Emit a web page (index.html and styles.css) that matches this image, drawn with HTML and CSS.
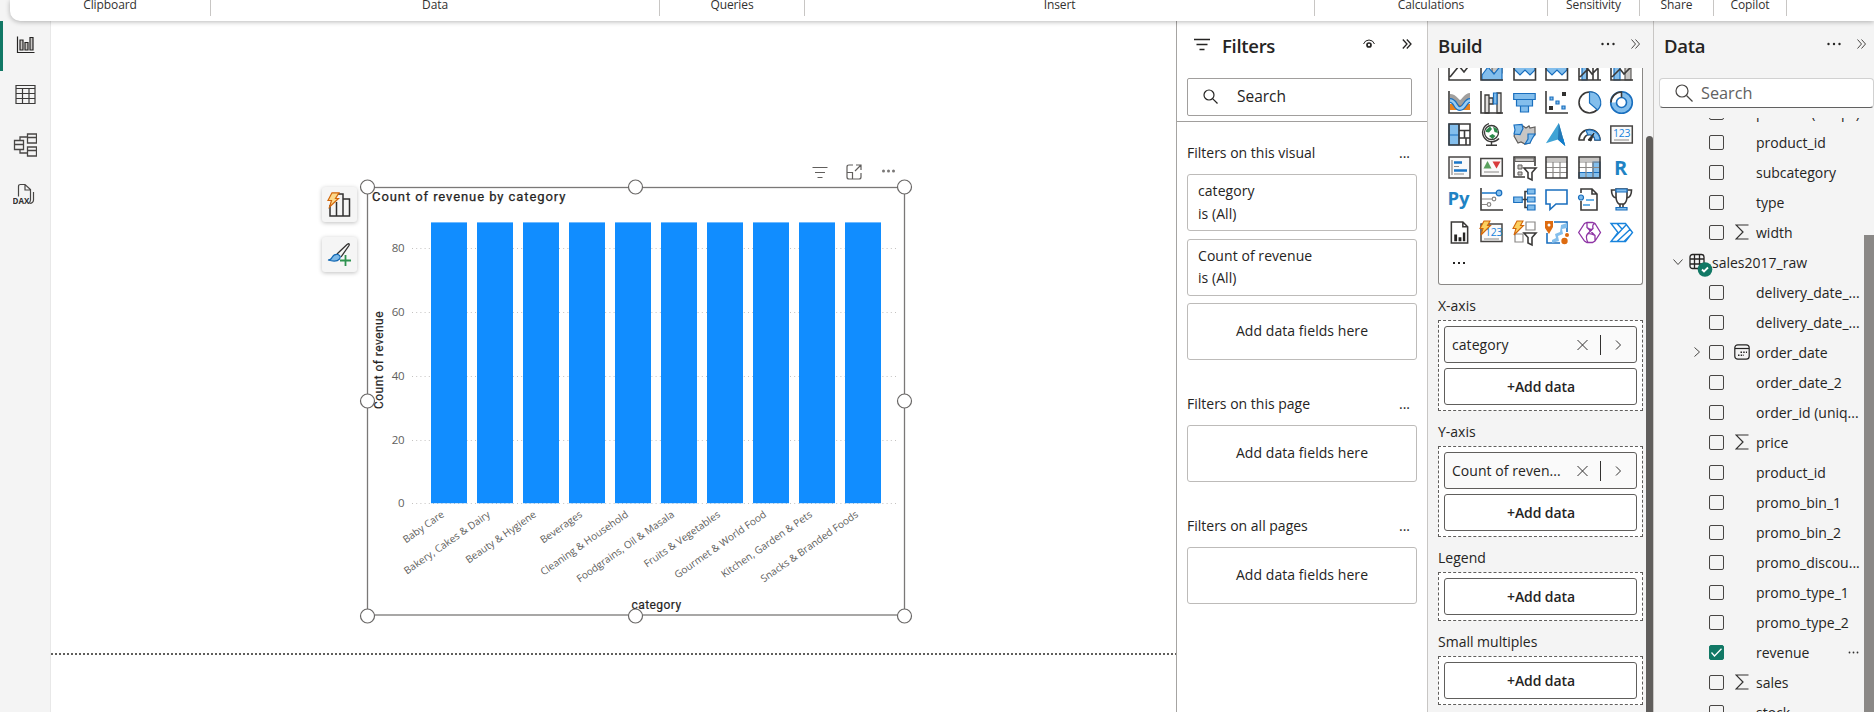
FILE: index.html
```html
<!DOCTYPE html>
<html lang="en">
<head>
<meta charset="utf-8">
<title>Report editor</title>
<link rel="stylesheet" href="styles.css">
</head>
<body>
<div class="app">
  <header class="ribbon">
    <div class="group g-clipboard">Clipboard</div>
    <div class="group g-data">Data</div>
    <div class="group g-queries">Queries</div>
    <div class="group g-insert">Insert</div>
    <div class="group g-calc">Calculations</div>
    <div class="group g-sens">Sensitivity</div>
    <div class="group g-share">Share</div>
    <div class="group g-copilot">Copilot</div>
  </header>

  <div class="workspace">
    <nav class="rail">
      <div class="rail-item active">
        <svg width="24" height="24" viewBox="0 0 24 24" fill="none" stroke="#252423" stroke-width="1.2"><path d="M4.5 3.500v16h17" /><path fill="#c8c6c4" d="M7 7h3v10H7zM12 9.500h3V17h-3zM17 4.500h3V17h-3z"/></svg>
      </div>
      <div class="rail-item">
        <svg width="24" height="24" viewBox="0 0 24 24" fill="none" stroke="#3b3a39" stroke-width="1.2"><path d="M3 2.500h19v18H3zM3 5.500h19M3 10.500h19M3 15.500h19M9.500 5.500v15M16 5.500v15"/></svg>
      </div>
      <div class="rail-item">
        <svg width="24" height="24" viewBox="0 0 24 24" fill="none" stroke="#484644" stroke-width="1.3"><path d="M14.500 1h9v9h-9zM14.500 4.500h9M14.500 14h9v9h-9zM14.500 17.500h9M1.500 7.500h9v9h-9zM1.500 11.500h9M7 7.500V4h7.500M7 16.500V20h7.500"/></svg>
      </div>
      <div class="rail-item">
        <svg width="24" height="24" viewBox="0 0 24 24" fill="none" stroke="#484644" stroke-width="1.2"><path d="M5.500 13.500V3.500q0-2 2-2H12l5.500 5V17q0 2-2 3M12 1.500V7h5.500M20.500 9v8q0 3-4 3.500"/><text x="-.500" y="20.500" class="dax">DAX</text></svg>
      </div>
    </nav>

    <main class="canvas">
      <div class="side-tools">
        <button class="tool"><svg width="25" height="25" viewBox="0 0 25 25" fill="none" stroke="#323130" stroke-width="1.500"><path d="M3 13v11h19.500V7H16M9.500 24V10M16 24V2H11"/><path d="M5 .8h7L8.500 6.500h3L2.500 15l2-6.500H1z" fill="#fcd98b" stroke="#d2660a" stroke-width="1.200"/></svg></button>
        <button class="tool"><svg width="25" height="25" viewBox="0 0 25 25" fill="none"><path d="M10 12 20 2.500q3-2 2 1L14 15" stroke="#323130" stroke-width="1.300"/><path d="M1 18q3 0 4-2.500 2-4 6-3 3.500 1.500 1.500 4.500-3 3.500-11.500 1z" fill="#7cb9e8" stroke="#1268b3" stroke-width="1.200"/><path d="M18.500 13v11M13 18.500h11" stroke="#2f9350" stroke-width="1.800"/></svg></button>
      </div>
      <div class="visual-actions">
        <svg width="16" height="16" viewBox="0 0 16 16" stroke="#605e5c" fill="none"><path d="M.5 3.500h15M3 8.500h10M5.500 13.500h5"/></svg>
        <svg width="16" height="16" viewBox="0 0 16 16" stroke="#605e5c" fill="none" stroke-width="1.200"><path d="M7 1H3Q1 1 1 3v10q0 2 2 2h10q2 0 2-2V9M1 8.500h5.500V15M9 7l6-6M10 1h5v5"/></svg>
        <svg width="16" height="16" viewBox="0 0 16 16" fill="#7a7877"><circle cx="3.500" cy="7" r="1.500"/><circle cx="8.500" cy="7" r="1.500"/><circle cx="13.500" cy="7" r="1.500"/></svg>
      </div>
      <svg class="chart" width="554" height="446" viewBox="359 178 554 446">
        <g stroke="#c4c2c0" stroke-dasharray="1 3.200"><path d="M412 248.500h486M412 312.500h486M412 376.500h486M412 440.500h486M412 503.500h486"/></g>
        <g fill="#118dff">
          <rect x="431" y="222.400" width="36" height="280.800"/><rect x="477" y="222.400" width="36" height="280.800"/><rect x="523" y="222.400" width="36" height="280.800"/><rect x="569" y="222.400" width="36" height="280.800"/><rect x="615" y="222.400" width="36" height="280.800"/><rect x="661" y="222.400" width="36" height="280.800"/><rect x="707" y="222.400" width="36" height="280.800"/><rect x="753" y="222.400" width="36" height="280.800"/><rect x="799" y="222.400" width="36" height="280.800"/><rect x="845" y="222.400" width="36" height="280.800"/>
        </g>
        <g class="tick" text-anchor="end"><text x="404.500" y="252">80</text><text x="404.500" y="316">60</text><text x="404.500" y="380">40</text><text x="404.500" y="443.500">20</text><text x="404.500" y="507">0</text></g>
        <g class="cat" text-anchor="end">
          <text transform="translate(445 516) rotate(-35)">Baby Care</text>
          <text transform="translate(491 516) rotate(-35)">Bakery, Cakes &amp; Dairy</text>
          <text transform="translate(537 516) rotate(-35)">Beauty &amp; Hygiene</text>
          <text transform="translate(583 516) rotate(-35)">Beverages</text>
          <text transform="translate(629 516) rotate(-35)">Cleaning &amp; Household</text>
          <text transform="translate(675 516) rotate(-35)">Foodgrains, Oil &amp; Masala</text>
          <text transform="translate(721 516) rotate(-35)">Fruits &amp; Vegetables</text>
          <text transform="translate(767 516) rotate(-35)">Gourmet &amp; World Food</text>
          <text transform="translate(813 516) rotate(-35)">Kitchen, Garden &amp; Pets</text>
          <text transform="translate(859 516) rotate(-35)">Snacks &amp; Branded Foods</text>
        </g>
        <text class="chart-title" x="372" y="201">Count of revenue by category</text>
        <text class="axis-title" text-anchor="middle" transform="translate(383 360) rotate(-90)">Count of revenue</text>
        <text class="axis-title" text-anchor="middle" x="656.500" y="609">category</text>
        <rect x="367.500" y="187.500" width="537" height="427.500" fill="none" stroke="#7a7877" stroke-width="1.300"/>
        <g fill="#fff" stroke="#6a6867" stroke-width="1.200"><circle cx="367.500" cy="187" r="7"/><circle cx="635.500" cy="187" r="7"/><circle cx="904.500" cy="187" r="7"/><circle cx="367.500" cy="401" r="7"/><circle cx="904.500" cy="401" r="7"/><circle cx="367.500" cy="616" r="7"/><circle cx="635.500" cy="616" r="7"/><circle cx="904.500" cy="616" r="7"/></g>
      </svg>
      <div class="page-edge"></div>
    </main>

    <aside class="filters">
      <div class="filters-head">
        <svg width="16" height="14" viewBox="0 0 16 14" stroke="#252423" stroke-width="1.300"><path d="M0 1.500h16M2.500 6.500h11M5.500 11.500h5"/></svg>
        <h2>Filters</h2>
        <svg class="eye" width="12" height="10" viewBox="0 0 12 10" fill="none" stroke="#252423"><path d="M.5 5Q2 1 6 1t5.500 4" /><circle cx="6" cy="6" r="2" stroke-width="1.700"/></svg>
        <svg width="10" height="10" viewBox="0 0 10 10" fill="none" stroke="#252423" stroke-width="1.300"><path d="M.8.5 5 5 .8 9.500M4.800.5 9 5 4.800 9.500"/></svg>
      </div>
      <div class="filter-search">
        <svg width="15" height="15" viewBox="0 0 15 15" fill="none" stroke="#252423" stroke-width="1.200"><circle cx="6" cy="6" r="5"/><path d="m9.600 9.600 4.900 4.900"/></svg>
        <span>Search</span>
      </div>
      <section class="filter-group first">
        <div class="group-head"><span>Filters on this visual</span><i>...</i></div>
        <div class="card"><p>category</p><p>is (All)</p></div>
        <div class="card"><p>Count of revenue</p><p>is (All)</p></div>
        <div class="card drop">Add data fields here</div>
      </section>
      <section class="filter-group">
        <div class="group-head"><span>Filters on this page</span><i>...</i></div>
        <div class="card drop">Add data fields here</div>
      </section>
      <section class="filter-group">
        <div class="group-head"><span>Filters on all pages</span><i>...</i></div>
        <div class="card drop">Add data fields here</div>
      </section>
    </aside>

    <aside class="build">
      <div class="pane-head">
        <h2>Build</h2>
        <svg width="14" height="4" viewBox="0 0 14 4" fill="#252423"><circle cx="1.500" cy="2" r="1.200"/><circle cx="7" cy="2" r="1.200"/><circle cx="12.500" cy="2" r="1.200"/></svg>
        <svg width="9" height="10" viewBox="0 0 9 10" fill="none" stroke="#484644"><path d="M.5.500 4.500 5l-4 4.500M4.500.500 8.500 5l-4 4.500"/></svg>
      </div>
      <div class="gallery">
        <div class="grid">
          <svg viewBox="0 0 23 23"><path class="k" d="M1 0v22h22M2 19 11 8l5 6 7-9M2 9l6-6"/></svg>
          <svg viewBox="0 0 23 23"><path class="g" d="M12 5h10v10H12z"/><path class="f" d="m2 17 6-8 6 7 8-10v16H2z"/><path class="k" d="M1 0v22h22"/></svg>
          <svg viewBox="0 0 23 23"><path class="f" d="M1 11l6 6 5-5 5 5 5-5V5H1z"/><path class="k" d="M1 0v22h21.500V0"/></svg>
          <svg viewBox="0 0 23 23"><path class="f" d="M1 11l6 6 5-5 5 5 5-5V5H1z"/><path class="k" d="M1 0v22h21.500V0"/></svg>
          <svg viewBox="0 0 23 23"><path class="f" d="M4 6h5v16H4z"/><path class="k" d="M1 0v22h22M2 19l8-8 4 5 8-8M9 5v17M15 8v14M20 4v18"/></svg>
          <svg viewBox="0 0 23 23"><path class="f" d="M4 4h6v18H4z"/><path class="g" d="M15 5h6v17h-6z"/><path class="k" d="M1 0v22h22M2 19l8-8 4 5 8-8"/></svg>

          <svg viewBox="0 0 23 23"><path d="M2 13h20v6H2z" fill="#e8811e"/><path d="M2 5.500c6 0 6 6 10 6s5-7 10-7" stroke="#a19f9d" stroke-width="5" fill="none"/><path d="M2 9.500c6 0 5 8 10 8s5-8 10-8" stroke="#1a6fbe" stroke-width="5" fill="none"/><path d="M2 9.500c6 0 5 8 10 8s5-8 10-8" stroke="#9accf2" stroke-width="2.500" fill="none"/><path class="k" d="M1 0v22h22"/></svg>
          <svg viewBox="0 0 23 23"><path fill="#e1dfdd" stroke="#3b3a39" stroke-width="1.300" d="M5 4h4v18H5zM9 7h4v6H9zM17 2h4v20h-4z"/><path class="k" d="M1 0v22h22"/><path class="f" d="M13.500 2H17v11h-3.500z"/></svg>
          <svg viewBox="0 0 23 23"><path class="f" d="M.700 2.500h21.500v6H.700zM3.500 8.500h16V15h-16zM7.500 15h8v6h-8z"/></svg>
          <svg viewBox="0 0 23 23"><path class="k" d="M1 0v22h22"/><path class="f" d="M5 6h3v3H5zM11 10h3v3h-3zM17 15h3v3h-3z"/><path fill="#323130" d="M17 1h4v4h-4zM4 15h4v4H4z"/></svg>
          <svg viewBox="0 0 23 23"><circle class="k" cx="11.500" cy="11.500" r="10.500"/><path class="f" d="M11.500 1v11l8 7A10.500 10.500 0 0 0 11.500 1z"/></svg>
          <svg viewBox="0 0 23 23"><circle cx="11.500" cy="11.500" r="8" fill="none" stroke="#83beec" stroke-width="6"/><path d="M4 11.500a7.500 7.500 0 0 1 7.500-7.500" stroke="#fff" stroke-width="5" fill="none"/><circle cx="11.500" cy="11.500" r="10.800" class="b"/><circle cx="11.500" cy="11.500" r="5" class="b"/><path class="k" d="M1 11.500A10.500 10.500 0 0 1 11.500 1v5.500"/></svg>

          <svg viewBox="0 0 23 23"><path class="f" d="M1 1h10v21H1zM1 12h10"/><path class="k" d="M1 1h21v21H1zM11 1v21M11 7.500h11M16.500 7.500V15M11 15h11M18 15v7"/></svg>
          <svg viewBox="0 0 23 23"><circle cx="11.500" cy="9.500" r="7" fill="#fff" stroke="#3b3a39" stroke-width="1.300"/><path fill="#2b8a4a" d="M6 7l4-3.500 2 2.500-3 3.500-3-.500zM13 3.500l4 2.500 1 4-3.500-1zM9 13l3.500-2 3 2-3 3z"/><path d="M9 .6A9.300 9.300 0 1 0 19 15.500M11.500 18.500v3.500M6 22.300h11" fill="none" stroke="#3b3a39" stroke-width="1.400"/></svg>
          <svg viewBox="0 0 23 23"><path class="g" d="M10 3l3 2 3-2 1 2 5-1v8l-4 3-1 5-5 1-4-2-3 1-4-7 2-4z"/><path class="f" d="M1 2l8-.500 1 4-3 6-6-.500 1-4zM15 11h7l-3 5-2 4-5 1 3-5z"/></svg>
          <svg viewBox="0 0 23 25"><path fill="#3fa3d5" d="M14 0 21 25l-8-7L0 22z"/><path fill="#2478b5" d="m14 0 7 25-8-7z"/><path fill="#117dcc" d="m13 18 8 7-2-8z"/></svg>
          <svg viewBox="0 0 23 23"><path class="k" d="M1 17a10.500 10.500 0 0 1 21 0h-5a5.500 5.500 0 0 0-11 0z"/><path class="f" d="M8 7.500A10.500 10.500 0 0 1 22 17h-5a5.500 5.500 0 0 0-7-5z"/><path d="m10 17 6-7-3 8z" fill="#323130" stroke="#323130"/></svg>
          <svg viewBox="0 0 23 23"><path class="gk" d="M.800 3h21.500v17H.800z"/><text class="num" x="3" y="14">123</text><path class="gs" d="M4 17h15"/></svg>

          <svg viewBox="0 0 23 23"><path class="gk" d="M1 1h21v21H1z"/><path class="gs" d="M4 4v15"/><path d="M6 6.500h8M6 14.500h13" stroke="#1976c8" stroke-width="2.500"/><path class="gs" d="M6 10.500h5M6 18h10"/></svg>
          <svg viewBox="0 0 23 23"><path class="gk" d="M.800 2.500h21.500v17.500H.800z"/><path d="M3.500 12.500 7.500 5l4 7.500z" fill="#58a05c"/><path d="M12.500 5.500h8l-4 7z" fill="#d83b3b"/><path class="gs" d="M4 16h15"/></svg>
          <svg viewBox="0 0 23 23"><path class="k" d="M12 21H1V1h21v9"/><path fill="#c8c6c4" stroke="#605e5c" d="M2 2h19v3.500H2zM5 9h4v4H5zM5 16h4v3H5z"/><path class="k" fill="#fff" d="M11 12h12l-4 4.500V24l-4-2v-5.500z"/></svg>
          <svg viewBox="0 0 23 23"><path class="gs" d="M1 6h21M1 11.500h21M1 16.500h21M8 6v16M15 6v16"/><path class="gg" d="M2 2h19v3H2z"/><path class="k" d="M1 1h21v21H1z"/></svg>
          <svg viewBox="0 0 23 23"><path class="f" d="M15 6h7v16h-7zM1 16.500h21V22H1z"/><path class="gs" d="M1 6h21M1 11.500h21M8 6v16M15 6v16"/><path class="gg" d="M2 2h19v3H2z"/><path class="k" d="M1 1h21v21H1z"/></svg>
          <svg viewBox="0 0 23 23"><text class="r" x="4" y="18.500">R</text></svg>

          <svg viewBox="0 0 23 23"><text class="py" x="-.500" y="17">Py</text></svg>
          <svg viewBox="0 0 23 23"><path class="k" d="M1 0v22h22"/><path d="M2 5h15" stroke="#1976c8" stroke-width="1.500"/><circle class="f" cx="19" cy="5" r="2.800"/><path class="gs" d="M2 11h10M2 16.500h5"/><circle class="gs" cx="14" cy="11" r="1.800"/><circle class="gs" cx="9" cy="16.500" r="1.800"/></svg>
          <svg viewBox="0 0 23 23"><path class="k" d="M9 11.500h6M15 3.500h-3v16h3"/><path class="f" d="M.700 9h8.500v5.500H.700zM14.500 1H22v5h-7.500zM14.500 9H22v5h-7.500zM14.500 17H22v5h-7.500z"/></svg>
          <svg viewBox="0 0 23 23"><path class="b" d="M1 2h21v14H11l-6 5.500V16H1z"/></svg>
          <svg viewBox="0 0 23 23"><path class="k" d="M3 5V1h11l5 5v16H3v-9M14 1v5h5"/><circle class="f" cx="3" cy="9.500" r="2.500"/><path d="M8 12h8M5 17h7" stroke="#3c9be0" stroke-width="1.500"/></svg>
          <svg viewBox="0 0 23 23"><path class="k" d="M5 2H1.500q0 7 4.500 8M18 2h3.500q0 7-4.500 8M6 1h11v7q0 6-3 8H9q-3-2-3-8zM10 16v4M13 16v4"/><path class="f" d="M6 1h11v3H6zM6 19.500h11v2.500H6z"/></svg>

          <svg viewBox="0 0 23 24"><path class="k" d="M3 1h12l5 5v17H3zM15 1v5h5"/><path fill="#252423" d="M6 14h3v7H6zM10.500 17h3v4h-3zM15 12h2.500v9H15z"/></svg>
          <svg viewBox="0 0 23 23"><path class="gk" d="M1 3h21v17.500H1z"/><text class="num" x="5" y="15">123</text><path class="gs" d="M4 18h15"/><path class="z" d="M4 0h6L7.500 4.500h3L1 14l2-6.500H0z"/></svg>
          <svg viewBox="0 0 23 23"><path class="gs" d="M13 1h9v8h-9zM2 13h8v8H2z"/><path class="z" d="M4 0h6L7.500 4.500h3L1 14l2-6.500H0z"/><path class="k" fill="#fff" d="M11 12h12l-4 4.500V24l-4-2v-5.500z"/></svg>
          <svg viewBox="0 0 23 23"><path class="b" d="M9 1h13v10M2 12v10h13"/><path d="M22 2v5l-5 1 1 5-5 2 1 5-7 2v-3l4-2-1-4 5-2 1-7z" fill="#83beec"/><path fill="#dd6b10" d="M0 0h8v6l-4 7-4-6z"/><circle cx="4" cy="4" r="1.500" fill="#fff"/><circle cx="22" cy="14" r="2" fill="#dd6b10"/><circle cx="19.500" cy="20" r="3.200" fill="#dd6b10"/></svg>
          <svg viewBox="0 0 23 23"><path d="M9 1.500h5.500l2.500 1 5.500 9-5.500 8.500-2.500 1.500H9L6.500 20 .700 11.500 6.500 2.500zM9 1.500v5l8 8v5.500M17 2.500q-3 .500-2 5L9.500 13q-2.500 3 .500 8.500M9 6.500q4 3 6 1M9.500 13q3-1 7.500 1.500" fill="none" stroke="#8f35a5" stroke-width="1.300"/></svg>
          <svg viewBox="0 0 23 23"><path d="M1 2.500h14.500l7 9-7 9H1l7-9zM1 2.500h6l5 5.500M7 20.500 20.500 8M3 18 16 4M14 20.500l7-7" fill="none" stroke="#1883dc" stroke-width="1.400"/></svg>
        </div>
        <div class="more"><b></b><b></b><b></b></div>
      </div>

      <h3>X-axis</h3>
      <div class="well">
        <div class="pill"><span>category</span><svg width="46" height="20" viewBox="0 0 46 20" fill="none" stroke="#323130"><path d="M.500 5l10 10M10.500 5l-10 10M23.500 0v20M39 5.500l4.500 4.500-4.500 4.500"/></svg></div>
        <div class="add">+Add data</div>
      </div>
      <h3>Y-axis</h3>
      <div class="well">
        <div class="pill"><span>Count of reven...</span><svg width="46" height="20" viewBox="0 0 46 20" fill="none" stroke="#323130"><path d="M.500 5l10 10M10.500 5l-10 10M23.500 0v20M39 5.500l4.500 4.500-4.500 4.500"/></svg></div>
        <div class="add">+Add data</div>
      </div>
      <h3>Legend</h3>
      <div class="well"><div class="add">+Add data</div></div>
      <h3>Small multiples</h3>
      <div class="well"><div class="add">+Add data</div></div>
      <div class="build-scroll"></div>
    </aside>

    <aside class="data">
      <div class="pane-head">
        <h2>Data</h2>
        <svg width="14" height="4" viewBox="0 0 14 4" fill="#252423"><circle cx="1.500" cy="2" r="1.200"/><circle cx="7" cy="2" r="1.200"/><circle cx="12.500" cy="2" r="1.200"/></svg>
        <svg width="9" height="10" viewBox="0 0 9 10" fill="none" stroke="#484644"><path d="M.5.500 4.500 5l-4 4.500M4.500.500 8.500 5l-4 4.500"/></svg>
      </div>
      <div class="data-search">
        <svg width="18" height="18" viewBox="0 0 18 18" fill="none" stroke="#484644" stroke-width="1.200"><circle cx="7" cy="7" r="6"/><path d="m11.500 11.500 6 6"/></svg>
        <span>Search</span>
      </div>
      <div class="tree">
        <div class="field"><i class="box"></i><span>product (uniq...)</span></div>
        <div class="field"><i class="box"></i><span>product_id</span></div>
        <div class="field"><i class="box"></i><span>subcategory</span></div>
        <div class="field"><i class="box"></i><span>type</span></div>
        <div class="field"><i class="box"></i><svg class="sigma" viewBox="0 0 14 16"><path d="M13.500 1H1l7 7-7 7h12.500"/></svg><span>width</span></div>
        <div class="table">
          <svg width="10" height="6" viewBox="0 0 10 6" fill="none" stroke="#484644"><path d="m.500.500 4.500 5 4.500-5"/></svg>
          <svg width="24" height="24" viewBox="0 0 24 24" fill="none" stroke="#252423" stroke-width="1.300"><rect x="1" y="1.500" width="14" height="14" rx="2.500"/><path d="M1 6h14M1 11h14M5.500 1.500v14M10.500 1.500v14"/><circle cx="16" cy="16.500" r="7.300" fill="#117865" stroke="none"/><path d="m13 16.500 2 2 4-4" stroke="#fff" stroke-width="1.800"/></svg>
          <span>sales2017_raw</span>
        </div>
        <div class="field"><i class="box"></i><span>delivery_date_...</span></div>
        <div class="field"><i class="box"></i><span>delivery_date_...</span></div>
        <div class="field expandable"><svg class="chev" width="6" height="10" viewBox="0 0 6 10" fill="none" stroke="#484644"><path d="m.500.500 5 4.500-5 4.500"/></svg><i class="box"></i><svg class="cal" viewBox="0 0 16 16" fill="none" stroke="#252423" stroke-width="1.200"><rect x=".800" y=".800" width="14.400" height="14.400" rx="3"/><path d="M1 4.500h14"/><path d="M6.500 8.300h6.500M4 11.300h6" stroke-width="1.500" stroke-dasharray="1.500 1.200"/></svg><span>order_date</span></div>
        <div class="field"><i class="box"></i><span>order_date_2</span></div>
        <div class="field"><i class="box"></i><span>order_id (uniq...</span></div>
        <div class="field"><i class="box"></i><svg class="sigma" viewBox="0 0 14 16"><path d="M13.500 1H1l7 7-7 7h12.500"/></svg><span>price</span></div>
        <div class="field"><i class="box"></i><span>product_id</span></div>
        <div class="field"><i class="box"></i><span>promo_bin_1</span></div>
        <div class="field"><i class="box"></i><span>promo_bin_2</span></div>
        <div class="field"><i class="box"></i><span>promo_discou...</span></div>
        <div class="field"><i class="box"></i><span>promo_type_1</span></div>
        <div class="field"><i class="box"></i><span>promo_type_2</span></div>
        <div class="field"><i class="box on"><svg width="11" height="9" viewBox="0 0 11 9" fill="none" stroke="#fff" stroke-width="1.300"><path d="m.500 4.500 3 3.500L10.500.800"/></svg></i><span>revenue</span><svg class="row-more" width="11" height="3" viewBox="0 0 11 3" fill="#323130"><circle cx="1.500" cy="1.500" r=".900"/><circle cx="5.500" cy="1.500" r=".900"/><circle cx="9.500" cy="1.500" r=".900"/></svg></div>
        <div class="field"><i class="box"></i><svg class="sigma" viewBox="0 0 14 16"><path d="M13.500 1H1l7 7-7 7h12.500"/></svg><span>sales</span></div>
        <div class="field"><i class="box"></i><span>stock</span></div>
      </div>
      <div class="data-scroll"></div>
    </aside>
  </div>
</div>
</body>
</html>
```

FILE: styles.css
```css
* { box-sizing: border-box; }
body { margin: 0; font-family: "Open Sans", "Noto Sans", sans-serif; font-size: 14px; color: #252423; letter-spacing: -0.03px; }
h2, h3, p { margin: 0; font-weight: 400; }
i { font-style: normal; }
svg { display: block; flex: none; }

.app { width: 1874px; height: 712px; overflow: hidden; background: #f4f4f4; display: flex; flex-direction: column; }

/* ribbon */
.ribbon { height: 21px; flex: none; margin-left: 10px; display: flex; background: #fff; border-bottom-left-radius: 10px; box-shadow: 0 1px 5px rgba(0,0,0,.28); position: relative; z-index: 2; }
.group { height: 16px; line-height: 10px; padding-bottom: 6px; font-size: 12px; letter-spacing: -0.1px; color: #323130; border-right: 1px solid #c8c6c4; display: flex; justify-content: center; align-items: flex-end; }
.g-clipboard { width: 201px; }
.g-data { width: 449px; }
.g-queries { width: 145px; }
.g-insert { width: 510px; }
.g-calc { width: 233px; }
.g-sens { width: 92px; }
.g-share { width: 74px; }
.g-copilot { width: 73px; }

.workspace { flex: 1; display: flex; min-height: 0; }

/* view rail */
.rail { width: 51px; border-right: 1px solid #e8e8e8; flex: none; }
.rail-item { height: 50px; border-left: 3px solid transparent; padding: 12px 0 0 10px; }
.rail-item.active { border-left-color: #117865; }
.dax { font: 700 8px "Open Sans", sans-serif; fill: #323130; stroke: none; }

/* report canvas */
.canvas { position: relative; width: 1125px; flex: none; background: #fff; }
.side-tools { position: absolute; left: 271px; top: 166px; display: grid; gap: 15px; }
.tool { width: 35px; height: 35px; padding: 5px; border: 0; border-radius: 3px; background: #f5f5f5; box-shadow: 0 1px 4px rgba(0,0,0,.25); }
.visual-actions { position: absolute; left: 761px; top: 143px; display: flex; gap: 18px; }
.chart { position: absolute; left: 308px; top: 157px; }
.page-edge { position: absolute; left: 0; right: 0; top: 632px; height: 2px; background: repeating-linear-gradient(90deg, #605e5c 0 2px, transparent 2px 4px); }
.tick { font-size: 11.500px; fill: #605e5c; letter-spacing: -.2px; }
.cat { font-size: 10.100px; fill: #605e5c; letter-spacing: 0; }
.chart-title { font: 400 13px Roboto, sans-serif; letter-spacing: .92px; fill: #252423; stroke: #252423; stroke-width: .25px; }
.axis-title { font: 400 12px Roboto, sans-serif; letter-spacing: .45px; fill: #252423; stroke: #252423; stroke-width: .2px; }

/* filters pane */
.filters { width: 252px; flex: none; background: #fff; border-left: 1px solid #a6a4a2; border-right: 1px solid #c8c6c4; }
.filters-head { height: 57px; padding: 0 15px 0 17px; display: flex; align-items: flex-start; }
.filters-head > svg { margin-top: 17px; }
.filters-head > .eye { margin: 18px 27px 0 auto; }
.filters-head > svg:last-child { margin-top: 18px; }
h2 { font-size: 18.500px; font-weight: 600; line-height: 24px; letter-spacing: -.3px; margin-top: 13px; }
.filters-head h2 { margin-left: 12px; }
.filter-search { margin: 0 15px 5px 10px; height: 38px; border: 1px solid #a19f9d; border-radius: 2px; display: flex; align-items: center; padding: 0 0 2px 15px; gap: 19px; font-size: 15.500px; }
.filter-group { padding: 0 10px; margin-top: 33px; }
.filter-group.first { border-top: 1px solid #a19f9d; margin-top: 0; padding-top: 20px; }
.group-head { height: 22px; line-height: 22px; margin-bottom: 10px; display: flex; justify-content: space-between; padding-right: 7px; letter-spacing: 0; }
.card { height: 57px; border: 1px solid #bdbbb9; border-radius: 3px; padding: 5px 10px; line-height: 22.500px; margin-bottom: 7.500px; letter-spacing: .06px; }
.card.drop { display: flex; align-items: center; justify-content: center; }
.filter-group .card:last-child { margin-bottom: 0; }

/* build pane */
.build { position: relative; width: 225px; flex: none; padding: 0 10px; }
.pane-head { display: flex; align-items: flex-start; height: 47px; }
.pane-head svg:nth-of-type(1) { margin: 21px 16px 0 auto; }
.pane-head svg:nth-of-type(2) { margin: 18px 3px 0 0; }
.gallery { height: 217px; border: 1px solid #8a8886; border-top: 0; border-radius: 0 0 3px 3px; background: #fff; overflow: hidden; padding-left: 9px; }
.grid { display: grid; grid-template-columns: repeat(6, 23px); grid-auto-rows: 23px; gap: 9.600px 9.400px; margin-top: -10px; }
.grid svg { width: 23px; height: 23px; overflow: visible; }
.k { fill: none; stroke: #3b3a39; stroke-width: 1.600; }
.k[fill="#fff"] { fill: #fff; }
.f { fill: #83beec; stroke: #1a6fbe; stroke-width: 1.200; }
.b { fill: none; stroke: #1a6fbe; stroke-width: 1.600; }
.g { fill: #c8c6c4; stroke: #605e5c; stroke-width: 1.200; }
.gg { fill: #c8c6c4; }
.gs { fill: none; stroke: #8a8886; stroke-width: 1.200; }
.gk { fill: #fafafa; stroke: #484644; stroke-width: 1.500; }
.z { fill: #fcd05f; stroke: #d2660a; stroke-width: 1.100; }
.num { font-size: 10.500px; fill: #1883dc; letter-spacing: -.3px; }
.r { font-size: 20px; font-weight: 700; fill: #1f83c4; }
.py { font-size: 18.500px; font-weight: 700; fill: #1f83c4; letter-spacing: -.2px; }
.more { display: flex; gap: 3px; padding: 18px 0 0 5px; }
.more b { width: 2px; height: 2px; background: #252423; }
h3 { font-size: 14px; line-height: 20px; padding: 11px 0 5px; height: 35px; letter-spacing: 0; }
.well { border: 1px dashed #605e5c; background: #fff; padding: 5px; display: grid; gap: 5px; }
.pill, .add { height: 37px; border: 1px solid #605e5c; border-radius: 3px; display: flex; align-items: center; }
.pill { justify-content: space-between; padding: 0 13px 0 7px; background: #fafafa; letter-spacing: .05px; }
.add { justify-content: center; font-weight: 600; letter-spacing: -.1px; padding-left: 1px; }
.build-scroll { position: absolute; right: 0; top: 115px; width: 7px; bottom: 0; background: #605e5c; border-radius: 4px 4px 0 0; }

/* data pane */
.data { position: relative; flex: 1; min-width: 0; border-left: 1px solid #c8c6c4; }
.data .pane-head { padding: 0 5px 0 10px; height: 57px; }
.data-search { margin-left: 5px; width: 215px; height: 30px; background: #fff; border: 1px solid #d1d1d1; border-bottom-color: #616161; border-radius: 4px; display: flex; align-items: center; padding-left: 15px; gap: 8px; font-size: 16.300px; color: #616161; }
.tree { margin-top: 10px; height: 595px; overflow: hidden; letter-spacing: 0; }
.field { height: 30px; display: grid; grid-template-columns: 14px 25px 30px auto; padding-left: 41px; align-items: center; white-space: nowrap; }
.tree .field:first-child { margin-top: -21px; }
.field .box { grid-column: 2; grid-row: 1; width: 15px; height: 15px; border: 1px solid #484644; border-radius: 2px; }
.field .box.on { background: #117865; border-color: #117865; display: grid; place-items: center; }
.field .chev { grid-column: 1; grid-row: 1; margin-left: -1px; }
.field .sigma { grid-column: 3; grid-row: 1; width: 14px; height: 16px; margin-left: 1px; fill: none; stroke: #323130; stroke-width: 1.200; }
.field .cal { grid-column: 3; grid-row: 1; width: 16px; height: 16px; }
.field span { grid-column: 4; grid-row: 1; margin-left: -8px; }
.field .row-more { grid-column: 4; grid-row: 1; margin-left: 84px; }
.table { height: 30px; display: flex; align-items: center; padding-left: 19px; }
.table svg:nth-of-type(2) { margin: 6px 0 0 6px; }
.table span { margin-left: -1px; }
.data-scroll { position: absolute; right: 0; top: 214px; bottom: 0; width: 10px; background: #8a8886; }
```
